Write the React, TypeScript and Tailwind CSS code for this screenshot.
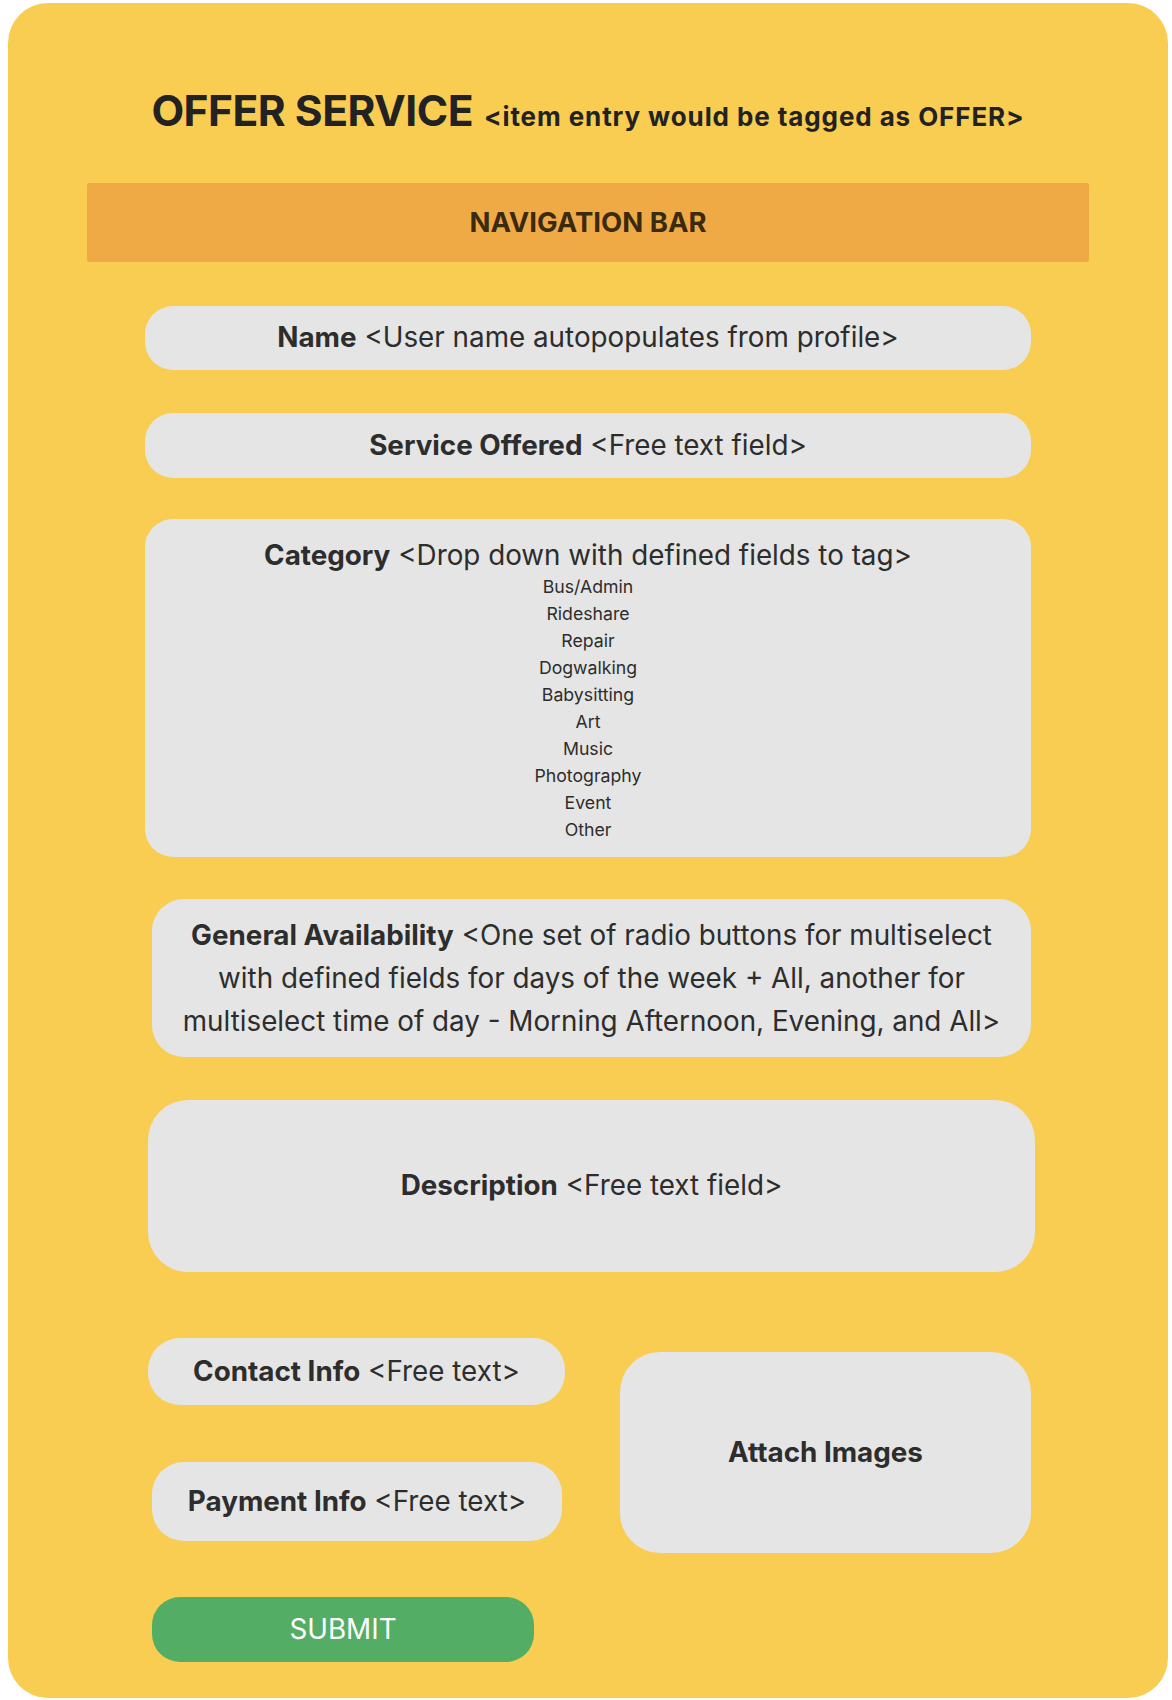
const categories = [
    'Bus/Admin',
    'Rideshare',
    'Repair',
    'Dogwalking',
    'Babysitting',
    'Art',
    'Music',
    'Photography',
    'Event',
    'Other',
];

// shared look for the grey form blocks
const field = 'flex items-center justify-center bg-[#e5e5e5] text-[27.8px] text-[#2d2d2d]';

function Label({ bold, rest }: { bold: string; rest?: string }) {
    return (
        <span>
            <span className="font-bold">{bold}</span>
            {rest ? <span> {rest}</span> : null}
        </span>
    );
}

export default function App() {
    return (
        <div className="min-h-[1700px] bg-white pl-[8px] pt-[3px]" style={{ fontFamily: 'Inter, "Noto Sans", sans-serif' }}>
            <div className="flex h-[1695px] w-[1160px] flex-col rounded-[40px] bg-[#f8cd52]">
                {/* Title */}
                <p className="mt-[78px] h-[60px] text-center text-[42.5px] leading-[60px] text-[#222]">
                    <span className="font-bold tracking-[-0.5px]">OFFER SERVICE</span>
                    <span className="ml-[11px] text-[26px] font-bold tracking-[0.9px]">&lt;item entry would be tagged as OFFER&gt;</span>
                </p>

                {/* Nav */}
                <div className="mx-[79px] mt-[42px] flex h-[79px] items-center justify-center rounded-[2px] bg-[#f0aa45] text-[27.5px] font-bold text-[#3a2a10]">
                    NAVIGATION BAR
                </div>

                <div className={`${field} ml-[137px] mt-[44px] h-[64px] w-[886px] rounded-[28px]`}>
                    <Label bold="Name" rest="<User name autopopulates from profile>" />
                </div>

                <div className={`${field} ml-[137px] mt-[43px] h-[65px] w-[886px] rounded-[28px]`}>
                    <Label bold="Service Offered" rest="<Free text field>" />
                </div>

                {/* Category */}
                <div className="ml-[137px] mt-[41px] flex h-[338px] w-[886px] flex-col items-center rounded-[28px] bg-[#e5e5e5] pt-[18px] text-[#2d2d2d]">
                    <div className="text-[27.8px] leading-[36px]">
                        <Label bold="Category" rest="<Drop down with defined fields to tag>" />
                    </div>
                    <ul className="text-center text-[17.7px] leading-[27px]">
                        {categories.map((c) => (
                            <li key={c}>{c}</li>
                        ))}
                    </ul>
                </div>

                {/* Availability */}
                <div className={`${field} ml-[144px] mt-[42px] h-[158px] w-[879px] rounded-[32px] text-center leading-[43px]`}>
                    <p>
                        <span className="font-bold">General Availability</span> &lt;One set of radio buttons for multiselect
                        <br />
                        with defined fields for days of the week + All, another for
                        <br />
                        multiselect time of day - Morning Afternoon, Evening, and All&gt;
                    </p>
                </div>

                <div className={`${field} ml-[140px] mt-[43px] h-[172px] w-[887px] rounded-[40px]`}>
                    <Label bold="Description" rest="<Free text field>" />
                </div>

                {/* Contact / payment / images */}
                <div className="ml-[140px] mt-[66px] flex items-start">
                    <div className="flex w-[417px] flex-col">
                        <div className={`${field} h-[67px] w-[417px] rounded-[32px]`}>
                            <Label bold="Contact Info" rest="<Free text>" />
                        </div>
                        <div className={`${field} ml-[4px] mt-[57px] h-[79px] w-[410px] rounded-[32px]`}>
                            <Label bold="Payment Info" rest="<Free text>" />
                        </div>
                    </div>
                    <div className={`${field} ml-[55px] mt-[14px] h-[201px] w-[411px] rounded-[40px]`}>
                        <Label bold="Attach Images" />
                    </div>
                </div>

                <button className="ml-[144px] mt-[44px] flex h-[65px] w-[382px] items-center justify-center rounded-[28px] bg-[#54ad65] text-[27.8px] text-white">
                    SUBMIT
                </button>
            </div>
        </div>
    );
}
